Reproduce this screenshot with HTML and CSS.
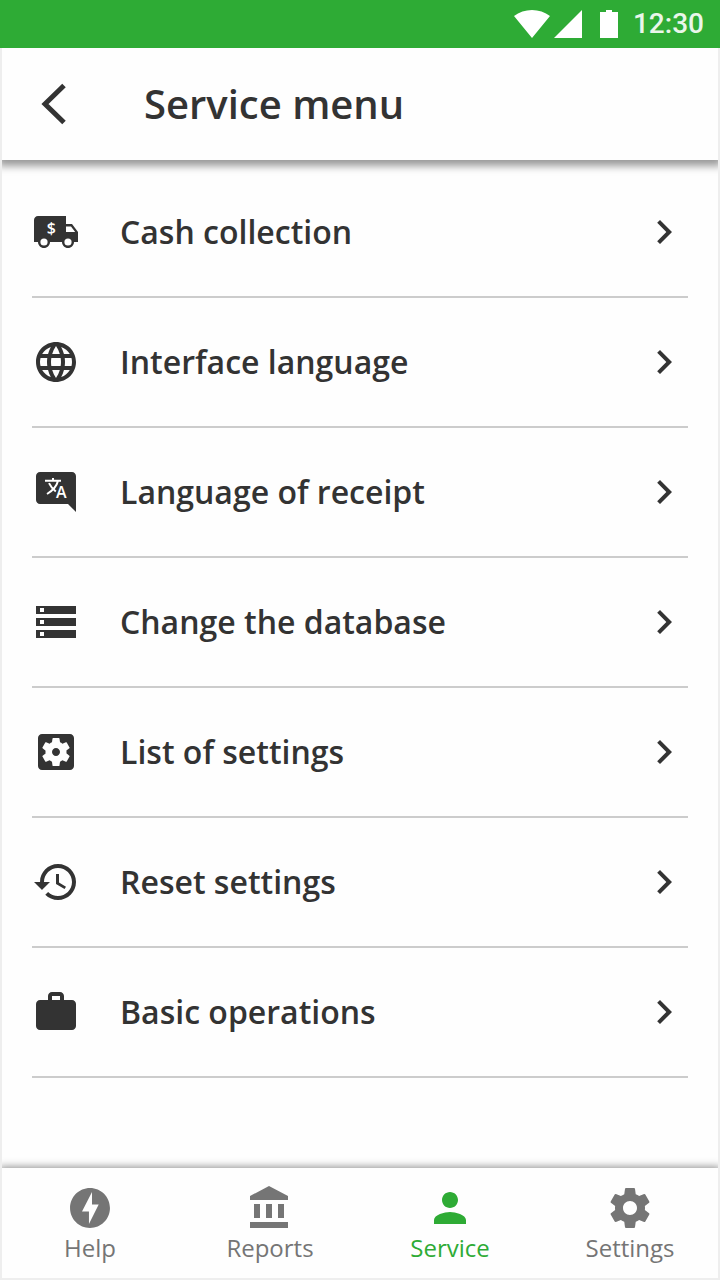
FILE: index.html
```html
<!DOCTYPE html>
<html lang="en">
<head>
<meta charset="utf-8">
<meta name="viewport" content="width=device-width, initial-scale=1">
<title>Service menu</title>
<link rel="stylesheet" href="styles.css">
</head>
<body>
<div class="screen">
  <div class="status-bar">
    <svg class="status-signal" viewBox="0 0 68 28" aria-hidden="true"><path d="M0 6C10-2 26-2 36 6L18 28zM68 0v28H40z"/></svg>
    <svg class="status-battery" viewBox="0 0 18 28" aria-hidden="true"><path d="M6 0h6v2h6v26H0V2h6z"/></svg>
    <span class="status-time">12:30</span>
  </div>

  <div class="app">
    <header class="app-bar">
      <button class="back" type="button" aria-label="Back">
        <svg class="icon" viewBox="0 0 48 48"><path class="back-line" d="M34 5.500L15 24l19 18.500"/></svg>
      </button>
      <h1 class="title">Service menu</h1>
    </header>

    <main class="content">
      <ul class="menu">
        <li><a class="menu-item" href="#cash">
          <svg class="icon" viewBox="0 0 24 24" aria-hidden="true"><path fill-rule="evenodd" d="M20 8h-3V4H3c-1.100 0-2 .9-2 2v11h2c0 1.660 1.340 3 3 3s3-1.340 3-3h6c0 1.660 1.340 3 3 3s3-1.340 3-3h2v-5l-3-4zM6 18.800a1.800 1.800 0 1 1 0-3.600 1.800 1.800 0 0 1 0 3.600zM19.500 9.200l2.100 2.800H17V9.200zM18 18.800a1.800 1.800 0 1 1 0-3.600 1.800 1.800 0 0 1 0 3.600z"/><text class="icon-letter" x="9.700" y="13" font-size="8">$</text></svg>
          <span class="menu-label">Cash collection</span>
          <svg class="icon" viewBox="0 0 24 24" aria-hidden="true"><path d="M10 6L8.590 7.410 13.170 12l-4.580 4.590L10 18l6-6z"/></svg>
        </a></li>
        <li><a class="menu-item" href="#interface-language">
          <svg class="icon" viewBox="0 0 24 24" aria-hidden="true"><path d="M11.990 2C6.470 2 2 6.480 2 12s4.470 10 9.990 10C17.520 22 22 17.520 22 12S17.520 2 11.990 2zm6.930 6h-2.950c-.32-1.250-.78-2.450-1.380-3.560 1.840.63 3.370 1.910 4.330 3.560zM12 4.040c.83 1.200 1.480 2.530 1.910 3.960h-3.820c.43-1.430 1.080-2.760 1.910-3.960zM4.260 14C4.100 13.360 4 12.690 4 12s.1-1.360.26-2h3.380c-.08.66-.14 1.320-.14 2 0 .68.06 1.340.14 2H4.260zm.82 2h2.950c.32 1.250.78 2.450 1.380 3.560-1.840-.63-3.370-1.900-4.330-3.560zm2.950-8H5.080c.96-1.660 2.490-2.930 4.330-3.560C8.810 5.550 8.350 6.750 8.030 8zM12 19.960c-.83-1.200-1.480-2.530-1.910-3.960h3.820c-.43 1.430-1.080 2.760-1.910 3.960zM14.340 14H9.660c-.09-.66-.16-1.320-.16-2 0-.68.07-1.350.16-2h4.680c.09.65.16 1.320.16 2 0 .68-.07 1.340-.16 2zm.25 5.560c.6-1.110 1.060-2.310 1.380-3.560h2.950c-.96 1.650-2.490 2.930-4.330 3.560zM16.360 14c.08-.66.14-1.320.14-2 0-.68-.06-1.340-.14-2h3.380c.16.64.26 1.310.26 2s-.1 1.360-.26 2h-3.380z"/></svg>
          <span class="menu-label">Interface language</span>
          <svg class="icon" viewBox="0 0 24 24" aria-hidden="true"><path d="M10 6L8.590 7.410 13.170 12l-4.580 4.590L10 18l6-6z"/></svg>
        </a></li>
        <li><a class="menu-item" href="#receipt-language">
          <svg class="icon" viewBox="0 0 24 24" aria-hidden="true"><path d="M21.990 4c0-1.100-.89-2-1.990-2H4c-1.100 0-2 .9-2 2v12c0 1.100.9 2 2 2h14l4 4-.01-18z"/><path class="icon-stroke" d="M6.500 6.400h8M10.500 5v1.400M13 6.400c-.6 2.600-2.400 4.800-5.500 6.600M8.500 7.600c.7 1.500 1.900 2.900 3.400 4.200"/><text class="icon-letter" x="14.700" y="15.100" font-size="8">A</text></svg>
          <span class="menu-label">Language of receipt</span>
          <svg class="icon" viewBox="0 0 24 24" aria-hidden="true"><path d="M10 6L8.590 7.410 13.170 12l-4.580 4.590L10 18l6-6z"/></svg>
        </a></li>
        <li><a class="menu-item" href="#database">
          <svg class="icon" viewBox="0 0 24 24" aria-hidden="true"><path d="M2 20h20v-4H2v4zm2-3h2v2H4v-2zM2 4v4h20V4H2zm4 3H4V5h2v2zm-4 7h20v-4H2v4zm2-3h2v2H4v-2z"/></svg>
          <span class="menu-label">Change the database</span>
          <svg class="icon" viewBox="0 0 24 24" aria-hidden="true"><path d="M10 6L8.590 7.410 13.170 12l-4.580 4.590L10 18l6-6z"/></svg>
        </a></li>
        <li><a class="menu-item" href="#settings-list">
          <svg class="icon" viewBox="0 0 24 24" aria-hidden="true"><path d="M12 10c-1.100 0-2 .9-2 2s.9 2 2 2 2-.9 2-2-.9-2-2-2zm7-7H5c-1.110 0-2 .9-2 2v14c0 1.100.89 2 2 2h14c1.110 0 2-.9 2-2V5c0-1.100-.89-2-2-2zm-1.750 9c0 .23-.02.46-.05.68l1.480 1.160c.13.11.17.3.08.45l-1.400 2.420c-.09.15-.27.21-.43.15l-1.740-.7c-.36.28-.76.51-1.180.69l-.26 1.850c-.03.17-.18.3-.35.3h-2.800c-.17 0-.32-.13-.35-.29l-.26-1.850c-.43-.18-.82-.41-1.180-.69l-1.740.7c-.16.06-.34 0-.43-.15l-1.400-2.420c-.09-.15-.05-.34.08-.45l1.480-1.160c-.03-.23-.05-.46-.05-.69 0-.23.02-.46.05-.68l-1.480-1.160c-.13-.11-.17-.3-.08-.45l1.400-2.420c.09-.15.27-.21.43-.15l1.740.7c.36-.28.76-.51 1.180-.69l.26-1.850c.03-.17.18-.3.35-.3h2.800c.17 0 .32.13.35.29l.26 1.850c.43.18.82.41 1.180.69l1.740-.7c.16-.06.34 0 .43.15l1.400 2.420c.09.15.05.34-.08.45l-1.480 1.160c.03.23.05.46.05.69z"/></svg>
          <span class="menu-label">List of settings</span>
          <svg class="icon" viewBox="0 0 24 24" aria-hidden="true"><path d="M10 6L8.590 7.410 13.170 12l-4.580 4.590L10 18l6-6z"/></svg>
        </a></li>
        <li><a class="menu-item" href="#reset">
          <svg class="icon" viewBox="0 0 24 24" aria-hidden="true"><path d="M13 3c-4.970 0-9 4.030-9 9H1l3.890 3.890.07.14L9 12H6c0-3.870 3.130-7 7-7s7 3.130 7 7-3.130 7-7 7c-1.930 0-3.680-.79-4.940-2.060l-1.420 1.420C8.270 19.990 10.510 21 13 21c4.970 0 9-4.030 9-9s-4.030-9-9-9zm-1 5v5l4.280 2.540.72-1.210-3.500-2.080V8H12z"/></svg>
          <span class="menu-label">Reset settings</span>
          <svg class="icon" viewBox="0 0 24 24" aria-hidden="true"><path d="M10 6L8.590 7.410 13.170 12l-4.580 4.590L10 18l6-6z"/></svg>
        </a></li>
        <li><a class="menu-item" href="#operations">
          <svg class="icon" viewBox="0 0 24 24" aria-hidden="true"><path d="M20 6h-4V4c0-1.110-.89-2-2-2h-4c-1.110 0-2 .89-2 2v2H4c-1.110 0-1.990.89-1.990 2L2 19c0 1.110.89 2 2 2h16c1.110 0 2-.89 2-2V8c0-1.110-.89-2-2-2zm-6 0h-4V4h4v2z"/></svg>
          <span class="menu-label">Basic operations</span>
          <svg class="icon" viewBox="0 0 24 24" aria-hidden="true"><path d="M10 6L8.590 7.410 13.170 12l-4.580 4.590L10 18l6-6z"/></svg>
        </a></li>
      </ul>
    </main>

    <nav class="tabs">
      <a class="tab" href="#help">
        <svg class="icon" viewBox="0 0 24 24" aria-hidden="true"><path d="M12 2.020c-5.510 0-9.980 4.470-9.980 9.980s4.470 9.980 9.980 9.980 9.980-4.470 9.980-9.980S17.510 2.020 12 2.020zM11.480 20v-6.260H8L13 4v6.260h3.350L11.480 20z"/></svg>
        <span>Help</span>
      </a>
      <a class="tab" href="#reports">
        <svg class="icon" viewBox="0 0 24 24" aria-hidden="true"><path d="M4 10v7h3v-7H4zm6 0v7h3v-7h-3zM2 22h19v-3H2v3zm14-12v7h3v-7h-3zm-4.500-9L2 6v2h19V6l-9.500-5z"/></svg>
        <span>Reports</span>
      </a>
      <a class="tab tab-active" href="#service" aria-current="page">
        <svg class="icon" viewBox="0 0 24 24" aria-hidden="true"><path d="M12 12c2.210 0 4-1.790 4-4s-1.790-4-4-4-4 1.790-4 4 1.790 4 4 4zm0 2c-2.670 0-8 1.340-8 4v2h16v-2c0-2.660-5.330-4-8-4z"/></svg>
        <span>Service</span>
      </a>
      <a class="tab" href="#settings">
        <svg class="icon" viewBox="0 0 24 24" aria-hidden="true"><path d="M19.430 12.980c.04-.32.07-.64.07-.98s-.03-.66-.07-.98l2.110-1.650c.19-.15.24-.42.12-.64l-2-3.460c-.12-.22-.39-.3-.61-.22l-2.490 1c-.52-.4-1.080-.73-1.690-.98l-.38-2.650C14.460 2.180 14.250 2 14 2h-4c-.25 0-.46.18-.49.42l-.38 2.650c-.61.25-1.170.59-1.690.98l-2.490-1c-.23-.09-.49 0-.61.22l-2 3.460c-.13.22-.07.49.12.64l2.110 1.650c-.04.32-.07.65-.07.98s.03.66.07.98l-2.110 1.650c-.19.15-.24.42-.12.64l2 3.460c.12.22.39.3.61.22l2.490-1c.52.4 1.080.73 1.690.98l.38 2.650c.03.24.24.42.49.42h4c.25 0 .46-.18.49-.42l.38-2.650c.61-.25 1.170-.59 1.690-.98l2.490 1c.23.09.49 0 .61-.22l2-3.460c.12-.22.07-.49-.12-.64l-2.110-1.650zM12 15.500c-1.930 0-3.500-1.570-3.500-3.500s1.570-3.500 3.500-3.500 3.500 1.570 3.500 3.500-1.570 3.500-3.500 3.500z"/></svg>
        <span>Settings</span>
      </a>
    </nav>
  </div>
</div>
</body>
</html>
```
FILE: styles.css
```css
* {
  box-sizing: border-box;
}

body {
  margin: 0;
  background: #fefefe;
  color: #333;
  font-family: "Open Sans", "Noto Sans", sans-serif;
}

a {
  color: inherit;
  text-decoration: none;
}

.screen {
  display: flex;
  flex-direction: column;
  min-height: 100vh;
}

.status-bar {
  display: flex;
  align-items: center;
  justify-content: flex-end;
  height: 48px;
  padding-right: 16px;
  background: #2eab35;
  color: #e9f6ea;
}

.status-signal,
.status-battery {
  height: 28px;
  fill: #fff;
}

.status-signal {
  width: 68px;
  margin-right: 18px;
}

.status-battery {
  width: 18px;
  margin-right: 15px;
}

.status-time {
  font: 500 28px/32px Roboto, sans-serif;
}

.app {
  position: relative;
  display: flex;
  flex: 1;
  flex-direction: column;
}

/* Thin frame drawn over the bars and the list */
.app::after {
  position: absolute;
  inset: 0;
  border: 2px solid #eee;
  border-top: 0;
  content: "";
  pointer-events: none;
}

.icon {
  display: block;
  flex: none;
  width: 48px;
  height: 48px;
  fill: currentColor;
}

.app-bar {
  display: flex;
  align-items: center;
  gap: 66px;
  height: 112px;
  padding: 0 30px;
  background: #fefefe;
  box-shadow: 0 4px 8px 2px rgba(0, 0, 0, 0.4);
  clip-path: inset(0 2px -20px 2px);
}

.back {
  padding: 0;
  border: 0;
  background: none;
  color: inherit;
}

.back-line {
  fill: none;
  stroke: currentColor;
  stroke-width: 5;
}

.title {
  margin: 0;
  font-size: 40px;
  font-weight: 600;
  line-height: 56px;
}

.content {
  flex: 1;
  padding: 8px 32px;
}

.menu {
  margin: 0;
  padding: 0;
  list-style: none;
}

.menu-item {
  display: flex;
  align-items: center;
  gap: 40px;
  padding: 40px 0;
  border-bottom: 2px solid #ccc;
}

.menu-label {
  flex: 1;
  font-size: 32px;
  font-weight: 600;
  line-height: 48px;
}

.icon-letter {
  fill: #fff;
  font-family: "Open Sans", sans-serif;
  font-weight: 600;
  text-anchor: middle;
}

.icon-stroke {
  fill: none;
  stroke: #fff;
  stroke-width: 1;
}

.tabs {
  display: grid;
  grid-template-columns: repeat(4, 1fr);
  height: 112px;
  padding-top: 16px;
  background: #fefefe;
  box-shadow: 0 0 8px 1px rgba(0, 0, 0, 0.45);
  clip-path: inset(-16px 2px 0 2px);
}

.tab {
  display: flex;
  flex-direction: column;
  align-items: center;
  color: #757575;
  font-size: 24px;
  line-height: 32px;
}

.tab-active {
  color: #2eab35;
}
```
